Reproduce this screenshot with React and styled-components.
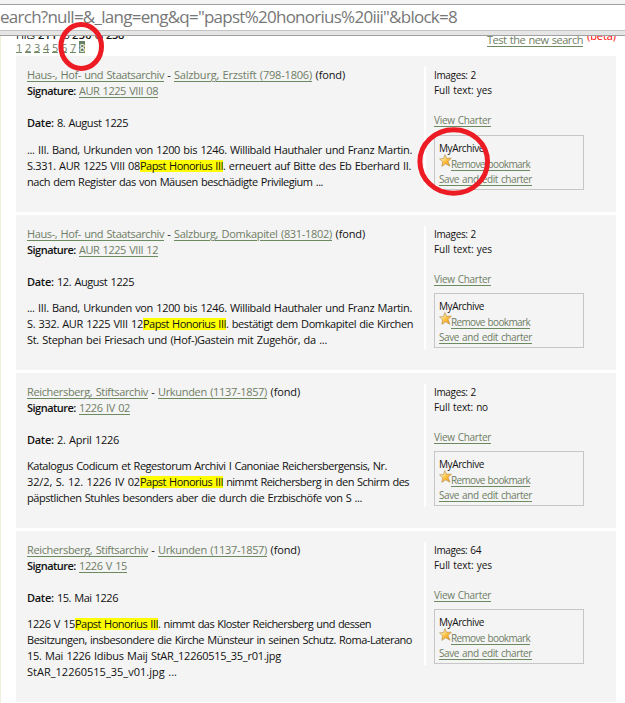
import React, { useLayoutEffect, useRef } from "react";
import styled, { createGlobalStyle } from "styled-components";

const Global = createGlobalStyle`
  * { box-sizing: border-box; }
  body { margin: 0; background: #fff; overflow: hidden; }
`;

const Page = styled.div`
  position: relative;
  width: 625px;
  height: 703px;
  overflow: hidden;
  display: flex;
  flex-direction: column;
  font-family: "Open Sans", "Noto Sans", sans-serif;
  font-size: 11px;
  line-height: 16px;
  color: #111;
`;

const Chrome = styled.header`
  flex: none;
  height: 36px;
  display: flex;
  flex-direction: column;
  padding-top: 4px;
  background: #f4f4f4;
  border-bottom: 1px solid #a0a0a0;
`;

const AddressBar = styled.div`
  height: 27px;
  border-top: 1px solid #a0a0a0;
  border-bottom: 1px solid #c4c4c4;
  background: #fff;
  color: #777;
  font-size: 17px;
  line-height: 24px;
`;

const ChromeEdge = styled.div`
  flex: 1;
  background: #e5e5e5;
`;

const Content = styled.main`
  flex: 1;
  min-height: 0;
  overflow: hidden;
  border-left: 1px solid #efefdd;
  padding: 0 9px 0 15px;
`;

const ResultBar = styled.div`
  height: 20px;
  display: flex;
  justify-content: space-between;
`;

const Hits = styled.div`
  margin-top: -8px;
`;

const HitLine = styled.div`
  height: 13px;
  line-height: 14px;
`;

const Pager = styled.nav`
  display: flex;
  gap: 3px;
  height: 13px;
  line-height: 13px;
`;

const PageLink = styled.a`
  width: 6px;
  height: 12px;
  text-align: center;
  color: ${(p) => (p.$current ? "#fff" : "#6f7d65")};
  background: ${(p) => (p.$current ? "#6b7f63" : "transparent")};
  border-bottom: 1px solid #6b8a60;
`;

const NewSearch = styled.div`
  display: flex;
  gap: 4px;
  margin-top: -4px;
`;

const Beta = styled.span`
  color: #f00;
  margin-top: -4px;
`;

const Card = styled.article`
  display: flex;
  height: ${(p) => p.$height}px;
  margin-bottom: 3px;
  padding: 11px 0 0 11px;
  background: #f4f4f4;
`;

const Details = styled.div`
  width: 397px;
`;

const Line = styled.div`
  height: 16px;
  white-space: pre;
`;

const DateLine = styled(Line)`
  margin: 16px 0 ${(p) => p.$gap}px;
`;

const Side = styled.aside`
  width: 160px;
  height: ${(p) => p.$height}px;
  padding-left: 8px;
  border-left: 2px solid #fff;
  font-size: 10px;
  line-height: 16px;
`;

const SideLine = styled.div`
  height: 15px;
  white-space: pre;
  display: flex;
  align-items: flex-start;
  margin-top: ${(p) => p.$top || 0}px;
`;

const Archive = styled.div`
  width: 150px;
  height: 55px;
  margin-top: ${(p) => p.$top}px;
  padding: 4px 0 0 4px;
  border: 1px solid #c6c6c6;
`;

const Text = styled.span`
  display: inline-block;
  vertical-align: top;
  white-space: pre;
  word-spacing: 0.8px;
  font-weight: ${(p) => (p.$kind === "bold" ? 600 : 400)};
  color: ${(p) => (p.$kind === "link" ? "#6f7d65" : "inherit")};
  background: ${(p) =>
    p.$kind === "mark"
      ? "linear-gradient(#ff0, #ff0) 0 2px / 100% 12px no-repeat"
      : "none"};
  text-decoration: ${(p) => (p.$kind === "link" ? "underline 1px #6b8a60" : "none")};
  text-underline-offset: 2px;
`;

// Tracks a run of text out or in so that it fills the given width.
function Run({ w, kind, children }) {
  const ref = useRef(null);
  useLayoutEffect(() => {
    const el = ref.current;
    const fit = () => {
      el.style.width = "auto";
      el.style.letterSpacing = "0px";
      const natural = el.getBoundingClientRect().width;
      el.style.letterSpacing = `${(w - natural) / el.textContent.length}px`;
      el.style.width = `${w}px`;
    };
    fit();
    document.fonts?.ready.then(fit);
  }, [w, children]);
  return <Text ref={ref} $kind={kind}>{children}</Text>;
}

const StarIcon = styled.svg`
  flex: none;
  width: 13px;
  height: 13px;
  margin: -2px -1px 0 0;
`;

const Star = () => (
  <StarIcon viewBox="0 0 12 12">
    <defs>
      <linearGradient id="star" x1="0" y1="0" x2="1" y2="1">
        <stop offset=".2" stopColor="#fff3c4" />
        <stop offset=".5" stopColor="#ffc547" />
        <stop offset="1" stopColor="#f08a00" />
      </linearGradient>
    </defs>
    <path
      d="M5.4.6 7.1 4l4.3-.2-3 3.2 1.7 4.2L6.2 9.1l-3.6 2.3.8-4.2L.5 4.5l3.7-.4Z"
      fill="url(#star)"
      stroke="#bd9a5c"
      strokeWidth=".7"
    />
  </StarIcon>
);

const Marker = styled.svg`
  position: absolute;
  left: 0;
  top: 0;
  pointer-events: none;
`;

const charters = [
  {
    height: 156, gap: 11, sideHeight: 123, boxTop: 8,
    archive: ["Haus-, Hof- und Staatsarchiv", 137],
    fond: ["Salzburg, Erzstift (798-1806)", 138],
    signature: ["AUR 1225 VIII 08", 79],
    date: ["8. August 1225", 71],
    images: ["Images: 2", 42], full: ["Full text: yes", 58],
    text: [
      [["... III. Band, Urkunden von 1200 bis 1246. Willibald Hauthaler und Franz Martin.", 385]],
      [["S.331. AUR 1225 VIII 08", 113], ["Papst Honorius III", 83, "mark"], [". erneuert auf Bitte des Eb Eberhard II.", 188]],
      [["nach dem Register das von Mäusen beschädigte Privilegium ...", 296]],
    ],
  },
  {
    height: 155, gap: 10, sideHeight: 123, boxTop: 7,
    archive: ["Haus-, Hof- und Staatsarchiv", 137],
    fond: ["Salzburg, Domkapitel (831-1802)", 158],
    signature: ["AUR 1225 VIII 12", 79],
    date: ["12. August 1225", 77],
    images: ["Images: 2", 42], full: ["Full text: yes", 58],
    text: [
      [["... III. Band, Urkunden von 1200 bis 1246. Willibald Hauthaler und Franz Martin.", 385]],
      [["S. 332. AUR 1225 VIII 12", 116], ["Papst Honorius III", 83, "mark"], [". bestätigt dem Domkapitel die Kirchen", 187]],
      [["St. Stephan bei Friesach und (Hof-)Gastein mit Zugehör, da ...", 300]],
    ],
  },
  {
    height: 155, gap: 10, sideHeight: 123, boxTop: 7,
    archive: ["Reichersberg, Stiftsarchiv", 121],
    fond: ["Urkunden (1137-1857)", 109],
    signature: ["1226 IV 02", 51],
    date: ["2. April 1226", 62],
    images: ["Images: 2", 42], full: ["Full text: no", 54],
    text: [
      [["Katalogus Codicum et Regestorum Archivi I Canoniae Reichersbergensis, Nr.", 360]],
      [["32/2, S. 12. 1226 IV 02", 113], ["Papst Honorius III", 83, "mark"], [" nimmt Reichersberg in den Schirm des", 186]],
      [["päpstlichen Stuhles besonders aber die durch die Erzbischöfe von S ...", 335]],
    ],
  },
  {
    height: 171, gap: 10, sideHeight: 123, boxTop: 7,
    archive: ["Reichersberg, Stiftsarchiv", 121],
    fond: ["Urkunden (1137-1857)", 109],
    signature: ["1226 V 15", 48],
    date: ["15. Mai 1226", 61],
    images: ["Images: 64", 47], full: ["Full text: yes", 58],
    text: [
      [["1226 V 15", 48], ["Papst Honorius III", 83, "mark"], [". nimmt das Kloster Reichersberg und dessen", 213]],
      [["Besitzungen, insbesondere die Kirche Münsteur in seinen Schutz. Roma-Laterano", 385]],
      [["15. Mai 1226 Idibus Maij StAR_12260515_35_r01.jpg", 254]],
      [["StAR_12260515_35_v01.jpg ...", 150]],
    ],
  },
];

function Charter({ c }) {
  return (
    <Card $height={c.height}>
      <Details>
        <Line>
          <Run w={c.archive[1]} kind="link">{c.archive[0]}</Run>
          <Run w={10}>{" - "}</Run>
          <Run w={c.fond[1]} kind="link">{c.fond[0]}</Run>
          <Run w={33}>{" (fond)"}</Run>
        </Line>
        <Line>
          <Run w={52} kind="bold">{"Signature: "}</Run>
          <Run w={c.signature[1]} kind="link">{c.signature[0]}</Run>
        </Line>
        <DateLine $gap={c.gap}>
          <Run w={30} kind="bold">{"Date: "}</Run>
          <Run w={c.date[1]}>{c.date[0]}</Run>
        </DateLine>
        {c.text.map((line, i) => (
          <Line key={i}>
            {line.map(([t, w, kind]) => <Run key={t} w={w} kind={kind}>{t}</Run>)}
          </Line>
        ))}
      </Details>
      <Side $height={c.sideHeight}>
        <SideLine><Run w={c.images[1]}>{c.images[0]}</Run></SideLine>
        <SideLine><Run w={c.full[1]}>{c.full[0]}</Run></SideLine>
        <SideLine $top={15}><Run w={57} kind="link">View Charter</Run></SideLine>
        <Archive $top={c.boxTop}>
          <SideLine><Run w={45}>MyArchive</Run></SideLine>
          <SideLine $top={1}><Star /><Run w={79} kind="link">Remove bookmark</Run></SideLine>
          <SideLine><Run w={93} kind="link">Save and edit charter</Run></SideLine>
        </Archive>
      </Side>
    </Card>
  );
}

export default function App() {
  return (
    <Page>
      <Global />
      <Chrome>
        <AddressBar>
          <Run w={457}>{'earch?null=&_lang=eng&q="papst%20honorius%20iii"&block=8'}</Run>
        </AddressBar>
        <ChromeEdge />
      </Chrome>
      <Content>
        <ResultBar>
          <Hits>
            <HitLine>
              <Run w={22}>{"Hits "}</Run>
              <Run w={19} kind="bold">211</Run>
              <Run w={15}>{" to "}</Run>
              <Run w={20} kind="bold">230</Run>
              <Run w={14}>{" of "}</Run>
              <Run w={18} kind="bold">238</Run>
            </HitLine>
            <Pager>
              {[1, 2, 3, 4, 5, 6, 7, 8].map((n) => (
                <PageLink key={n} $current={n === 8}>{n}</PageLink>
              ))}
            </Pager>
          </Hits>
          <NewSearch>
            <Run w={96} kind="link">Test the new search</Run>
            <Beta><Run w={29}>(beta)</Run></Beta>
          </NewSearch>
        </ResultBar>
        {charters.map((c, i) => <Charter key={i} c={c} />)}
      </Content>
      <Marker width="625" height="220" fill="none" stroke="#ed1c24" strokeWidth="5">
        <ellipse cx="81.2" cy="46.5" rx="20.3" ry="22" />
        <ellipse cx="453.7" cy="161.5" rx="33.8" ry="31.8" />
      </Marker>
    </Page>
  );
}
